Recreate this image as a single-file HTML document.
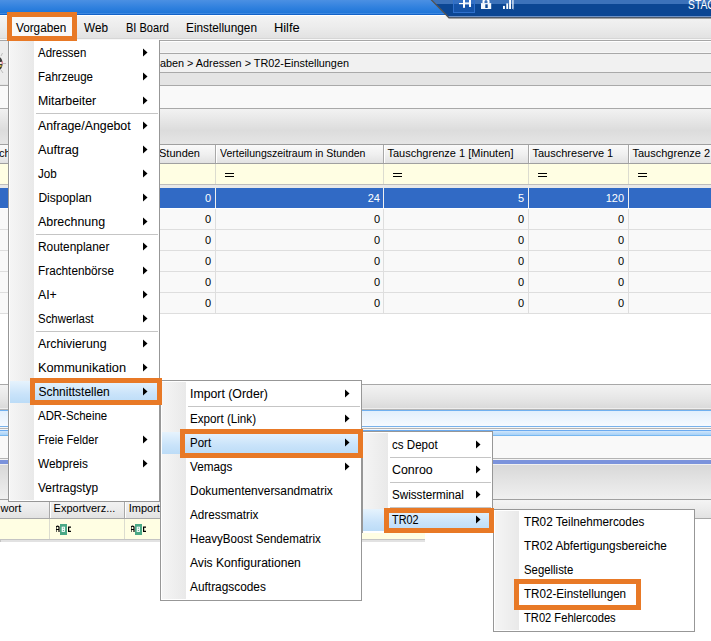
<!DOCTYPE html>
<html><head><meta charset="utf-8"><style>
html,body{margin:0;padding:0;width:711px;height:641px;overflow:hidden;background:#fff;position:relative}
.t{position:absolute;white-space:pre;font-family:"Liberation Sans",sans-serif;color:#000;-webkit-text-stroke:0.05px currentColor}
</style></head><body>
<div style="position:absolute;left:0px;top:0px;width:711px;height:13px;background:linear-gradient(#4b90e3,#2f80de 60%,#1f76d8)"></div>
<div style="position:absolute;left:0px;top:13px;width:711px;height:1px;background:#3d88e0"></div>
<div style="position:absolute;left:0px;top:14px;width:711px;height:1px;background:#1262c8"></div>
<div style="position:absolute;left:0px;top:15px;width:711px;height:1px;background:#ffffff"></div>
<div style="position:absolute;left:0px;top:16px;width:711px;height:22px;background:linear-gradient(#f3f3f3,#ececec 50%,#e2e2e2)"></div>
<div style="position:absolute;left:0px;top:38px;width:711px;height:1px;background:#d6d6d6"></div>
<div style="position:absolute;left:0px;top:39px;width:711px;height:1px;background:#f8f8f8"></div>
<svg style="position:absolute;left:0;top:0" width="711" height="20"><polygon points="431,0 711,0 711,18 449,18" fill="#0b4693"/><polygon points="431,0 711,0 711,4 435,4" fill="#3c72ba"/><polygon points="447,16 711,16 711,17.4 448.4,17.4" fill="#6e92c6"/><polyline points="431,-0.5 449,17.8 711,17.8" fill="none" stroke="#555" stroke-width="1.3"/></svg>
<div style="position:absolute;left:453px;top:-1px;width:22px;height:14px;background:rgba(40,110,210,0.35);border:1px solid #2f70cc;box-sizing:border-box"></div>
<svg style="position:absolute;left:455px;top:0" width="120" height="14"><g fill="#fff"><rect x="4" y="3" width="4" height="1.2"/><rect x="8" y="0" width="2" height="7.8"/><rect x="14" y="0" width="2" height="7"/><rect x="10" y="2.4" width="4" height="2" fill="#e8f0fb"/></g></svg>
<svg style="position:absolute;left:478px;top:0" width="20" height="14"><path d="M5.5 3.5 V1.5 a2.5 2.5 0 0 1 5 0 V3.5" stroke="#fff" stroke-width="2" fill="none"/><rect x="3" y="3.1" width="10.2" height="5.9" fill="#f4f8fd"/><rect x="7.3" y="4.3" width="2.4" height="3.7" fill="#0b4693"/></svg>
<svg style="position:absolute;left:501px;top:0" width="20" height="14"><g fill="#fff"><rect x="2" y="5.9" width="1.9" height="3.1"/><rect x="5.3" y="3.4" width="1.9" height="5.6"/><rect x="8.1" y="0" width="1.9" height="9"/></g><path d="M11 0 L12.8 1 L11 2 L12.8 3 L11 4 L12.8 5 L11 6 L12.8 7 L11 8 L12.8 9" stroke="#e0ebf8" stroke-width="0.9" fill="none"/></svg>
<div class="t" style="left:687.5px;top:-2.41px;font-size:12px;line-height:14px;transform:scaleX(0.86);transform-origin:0 0;color:#fff">STAGING</div>
<div class="t" style="left:84px;top:20.89px;font-size:12px;line-height:14px;transform:scaleX(0.9792);transform-origin:0.0px 0;color:#000">Web</div>
<div class="t" style="left:125.5px;top:20.89px;font-size:12px;line-height:14px;transform:scaleX(0.92);transform-origin:0 0;color:#000">BI Board</div>
<div class="t" style="left:186px;top:20.89px;font-size:12px;line-height:14px;transform:scaleX(0.9845);transform-origin:1.0px 0;color:#000">Einstellungen</div>
<div class="t" style="left:274.3px;top:20.89px;font-size:12px;line-height:14px;transform:scaleX(1.0739);transform-origin:0.7px 0;color:#000">Hilfe</div>
<div style="position:absolute;left:12px;top:17px;width:60px;height:19px;background:#f9f9f9"></div>
<div class="t" style="left:16px;top:20.89px;font-size:12px;line-height:14px;transform:scaleX(0.9784);transform-origin:0.0px 0;color:#000">Vorgaben</div>
<div style="position:absolute;left:0px;top:40px;width:711px;height:1px;background:#a6a6a6"></div>
<div style="position:absolute;left:0px;top:41px;width:711px;height:1px;background:#ffffff"></div>
<div style="position:absolute;left:0px;top:42px;width:711px;height:10px;background:#f0f0f0"></div>
<div style="position:absolute;left:0px;top:52px;width:711px;height:1px;background:#f6f6f6"></div>
<div style="position:absolute;left:0px;top:53px;width:711px;height:1px;background:#a8a8a8"></div>
<div style="position:absolute;left:0px;top:54px;width:711px;height:18px;background:#f1f1f1"></div>
<div style="position:absolute;left:0px;top:72px;width:711px;height:1px;background:#a9a9a9"></div>
<div style="position:absolute;left:0px;top:73px;width:711px;height:12px;background:#e4e4e4"></div>
<div style="position:absolute;left:0px;top:85px;width:711px;height:1px;background:#a9a9a9"></div>
<div style="position:absolute;left:0px;top:86px;width:711px;height:22px;background:#f9f9f9"></div>
<div style="position:absolute;left:0px;top:108px;width:711px;height:1px;background:#a9a9a9"></div>
<div style="position:absolute;left:0px;top:109px;width:711px;height:36px;background:linear-gradient(#f2f2f2,#dcdcdc 60%,#e6e6e6)"></div>
<div style="position:absolute;left:0px;top:41px;width:8px;height:43px;background:#ececec"></div>
<svg style="position:absolute;left:0px;top:48px" width="8" height="30"><g stroke="#b0b0b0" stroke-width="0.8" fill="none"><path d="M1 8 L2.5 5"/><path d="M2 15.5 L6 15.5"/><path d="M1 22 L3 25"/></g><ellipse cx="-1" cy="15.5" rx="3.6" ry="6.5" fill="#3c3c3c"/><rect x="0" y="14" width="2" height="2" fill="#f0f0f0"/><rect x="1.5" y="13.5" width="1.5" height="2.5" fill="#e08898"/><rect x="0" y="17" width="1.5" height="2" fill="#c8b040"/></svg>
<div class="t" style="left:160px;top:57.41px;font-size:11px;line-height:13px;transform:scaleX(0.985);transform-origin:0 0;-webkit-text-stroke:0;color:#000">aben &gt; Adressen &gt; TR02-Einstellungen</div>
<div style="position:absolute;left:0px;top:144px;width:711px;height:1px;background:#a0a0a0"></div>
<div style="position:absolute;left:0px;top:145px;width:711px;height:18px;background:linear-gradient(#fafafa,#f0f0f0 50%,#e2e2e2)"></div>
<div style="position:absolute;left:0px;top:163px;width:711px;height:1px;background:#a0a0a0"></div>
<div style="position:absolute;left:215px;top:145px;width:1px;height:18px;background:#a8a8a8"></div>
<div style="position:absolute;left:216px;top:145px;width:1px;height:18px;background:#ffffff"></div>
<div style="position:absolute;left:383px;top:145px;width:1px;height:18px;background:#a8a8a8"></div>
<div style="position:absolute;left:384px;top:145px;width:1px;height:18px;background:#ffffff"></div>
<div style="position:absolute;left:528px;top:145px;width:1px;height:18px;background:#a8a8a8"></div>
<div style="position:absolute;left:529px;top:145px;width:1px;height:18px;background:#ffffff"></div>
<div style="position:absolute;left:628px;top:145px;width:1px;height:18px;background:#a8a8a8"></div>
<div style="position:absolute;left:629px;top:145px;width:1px;height:18px;background:#ffffff"></div>
<div class="t" style="left:-1px;top:147.11px;font-size:11px;line-height:13px;-webkit-text-stroke:0;color:#000">ch</div>
<div class="t" style="left:159px;top:147.11px;font-size:11px;line-height:13px;-webkit-text-stroke:0;color:#000">Stunden</div>
<div class="t" style="left:220px;top:147.11px;font-size:11px;line-height:13px;transform:scaleX(0.955);transform-origin:0 0;-webkit-text-stroke:0;color:#000">Verteilungszeitraum in Stunden</div>
<div class="t" style="left:387.5px;top:147.11px;font-size:11px;line-height:13px;-webkit-text-stroke:0;color:#000">Tauschgrenze 1 [Minuten]</div>
<div class="t" style="left:532.5px;top:147.11px;font-size:11px;line-height:13px;-webkit-text-stroke:0;color:#000">Tauschreserve 1</div>
<div class="t" style="left:632.5px;top:147.11px;font-size:11px;line-height:13px;-webkit-text-stroke:0;color:#000">Tauschgrenze 2</div>
<div style="position:absolute;left:0px;top:164px;width:711px;height:20px;background:#fffee3"></div>
<div style="position:absolute;left:215px;top:164px;width:1px;height:20px;background:#dcdcd0"></div>
<div style="position:absolute;left:383px;top:164px;width:1px;height:20px;background:#dcdcd0"></div>
<div style="position:absolute;left:528px;top:164px;width:1px;height:20px;background:#dcdcd0"></div>
<div style="position:absolute;left:628px;top:164px;width:1px;height:20px;background:#dcdcd0"></div>
<div style="position:absolute;left:225px;top:173px;width:9px;height:1px;background:#000"></div>
<div style="position:absolute;left:225px;top:176px;width:9px;height:1px;background:#000"></div>
<div style="position:absolute;left:393px;top:173px;width:9px;height:1px;background:#000"></div>
<div style="position:absolute;left:393px;top:176px;width:9px;height:1px;background:#000"></div>
<div style="position:absolute;left:538px;top:173px;width:9px;height:1px;background:#000"></div>
<div style="position:absolute;left:538px;top:176px;width:9px;height:1px;background:#000"></div>
<div style="position:absolute;left:638px;top:173px;width:9px;height:1px;background:#000"></div>
<div style="position:absolute;left:638px;top:176px;width:9px;height:1px;background:#000"></div>
<div style="position:absolute;left:0px;top:184px;width:711px;height:1px;background:#bdbdbd"></div>
<div style="position:absolute;left:0px;top:185px;width:711px;height:3px;background:#e8e8e8"></div>
<div style="position:absolute;left:0px;top:188px;width:711px;height:20px;background:#316ac5"></div>
<div style="position:absolute;left:215px;top:188px;width:1px;height:20px;background:#f0f0f0"></div>
<div style="position:absolute;left:383px;top:188px;width:1px;height:20px;background:#f0f0f0"></div>
<div style="position:absolute;left:528px;top:188px;width:1px;height:20px;background:#f0f0f0"></div>
<div style="position:absolute;left:628px;top:188px;width:1px;height:20px;background:#f0f0f0"></div>
<div class="t" style="right:500px;top:191.5px;font-size:11px;line-height:13px;color:#fff;-webkit-text-stroke:0">0</div>
<div class="t" style="right:331px;top:191.5px;font-size:11px;line-height:13px;color:#fff;-webkit-text-stroke:0">24</div>
<div class="t" style="right:187px;top:191.5px;font-size:11px;line-height:13px;color:#fff;-webkit-text-stroke:0">5</div>
<div class="t" style="right:87px;top:191.5px;font-size:11px;line-height:13px;color:#fff;-webkit-text-stroke:0">120</div>
<div style="position:absolute;left:0px;top:209px;width:711px;height:20px;background:#f9f9f9"></div>
<div style="position:absolute;left:0px;top:229px;width:711px;height:1px;background:#dedede"></div>
<div style="position:absolute;left:215px;top:209px;width:1px;height:21px;background:#dedede"></div>
<div style="position:absolute;left:383px;top:209px;width:1px;height:21px;background:#dedede"></div>
<div style="position:absolute;left:528px;top:209px;width:1px;height:21px;background:#dedede"></div>
<div style="position:absolute;left:628px;top:209px;width:1px;height:21px;background:#dedede"></div>
<div class="t" style="right:500px;top:212.5px;font-size:11px;line-height:13px;color:#000;-webkit-text-stroke:0">0</div>
<div class="t" style="right:331px;top:212.5px;font-size:11px;line-height:13px;color:#000;-webkit-text-stroke:0">0</div>
<div class="t" style="right:187px;top:212.5px;font-size:11px;line-height:13px;color:#000;-webkit-text-stroke:0">0</div>
<div class="t" style="right:87px;top:212.5px;font-size:11px;line-height:13px;color:#000;-webkit-text-stroke:0">0</div>
<div style="position:absolute;left:0px;top:230px;width:711px;height:20px;background:#f9f9f9"></div>
<div style="position:absolute;left:0px;top:250px;width:711px;height:1px;background:#dedede"></div>
<div style="position:absolute;left:215px;top:230px;width:1px;height:21px;background:#dedede"></div>
<div style="position:absolute;left:383px;top:230px;width:1px;height:21px;background:#dedede"></div>
<div style="position:absolute;left:528px;top:230px;width:1px;height:21px;background:#dedede"></div>
<div style="position:absolute;left:628px;top:230px;width:1px;height:21px;background:#dedede"></div>
<div class="t" style="right:500px;top:233.5px;font-size:11px;line-height:13px;color:#000;-webkit-text-stroke:0">0</div>
<div class="t" style="right:331px;top:233.5px;font-size:11px;line-height:13px;color:#000;-webkit-text-stroke:0">0</div>
<div class="t" style="right:187px;top:233.5px;font-size:11px;line-height:13px;color:#000;-webkit-text-stroke:0">0</div>
<div class="t" style="right:87px;top:233.5px;font-size:11px;line-height:13px;color:#000;-webkit-text-stroke:0">0</div>
<div style="position:absolute;left:0px;top:251px;width:711px;height:20px;background:#f9f9f9"></div>
<div style="position:absolute;left:0px;top:271px;width:711px;height:1px;background:#dedede"></div>
<div style="position:absolute;left:215px;top:251px;width:1px;height:21px;background:#dedede"></div>
<div style="position:absolute;left:383px;top:251px;width:1px;height:21px;background:#dedede"></div>
<div style="position:absolute;left:528px;top:251px;width:1px;height:21px;background:#dedede"></div>
<div style="position:absolute;left:628px;top:251px;width:1px;height:21px;background:#dedede"></div>
<div class="t" style="right:500px;top:254.5px;font-size:11px;line-height:13px;color:#000;-webkit-text-stroke:0">0</div>
<div class="t" style="right:331px;top:254.5px;font-size:11px;line-height:13px;color:#000;-webkit-text-stroke:0">0</div>
<div class="t" style="right:187px;top:254.5px;font-size:11px;line-height:13px;color:#000;-webkit-text-stroke:0">0</div>
<div class="t" style="right:87px;top:254.5px;font-size:11px;line-height:13px;color:#000;-webkit-text-stroke:0">0</div>
<div style="position:absolute;left:0px;top:272px;width:711px;height:20px;background:#f9f9f9"></div>
<div style="position:absolute;left:0px;top:292px;width:711px;height:1px;background:#dedede"></div>
<div style="position:absolute;left:215px;top:272px;width:1px;height:21px;background:#dedede"></div>
<div style="position:absolute;left:383px;top:272px;width:1px;height:21px;background:#dedede"></div>
<div style="position:absolute;left:528px;top:272px;width:1px;height:21px;background:#dedede"></div>
<div style="position:absolute;left:628px;top:272px;width:1px;height:21px;background:#dedede"></div>
<div class="t" style="right:500px;top:275.5px;font-size:11px;line-height:13px;color:#000;-webkit-text-stroke:0">0</div>
<div class="t" style="right:331px;top:275.5px;font-size:11px;line-height:13px;color:#000;-webkit-text-stroke:0">0</div>
<div class="t" style="right:187px;top:275.5px;font-size:11px;line-height:13px;color:#000;-webkit-text-stroke:0">0</div>
<div class="t" style="right:87px;top:275.5px;font-size:11px;line-height:13px;color:#000;-webkit-text-stroke:0">0</div>
<div style="position:absolute;left:0px;top:293px;width:711px;height:20px;background:#f9f9f9"></div>
<div style="position:absolute;left:0px;top:313px;width:711px;height:1px;background:#dedede"></div>
<div style="position:absolute;left:215px;top:293px;width:1px;height:21px;background:#dedede"></div>
<div style="position:absolute;left:383px;top:293px;width:1px;height:21px;background:#dedede"></div>
<div style="position:absolute;left:528px;top:293px;width:1px;height:21px;background:#dedede"></div>
<div style="position:absolute;left:628px;top:293px;width:1px;height:21px;background:#dedede"></div>
<div class="t" style="right:500px;top:296.5px;font-size:11px;line-height:13px;color:#000;-webkit-text-stroke:0">0</div>
<div class="t" style="right:331px;top:296.5px;font-size:11px;line-height:13px;color:#000;-webkit-text-stroke:0">0</div>
<div class="t" style="right:187px;top:296.5px;font-size:11px;line-height:13px;color:#000;-webkit-text-stroke:0">0</div>
<div class="t" style="right:87px;top:296.5px;font-size:11px;line-height:13px;color:#000;-webkit-text-stroke:0">0</div>
<div style="position:absolute;left:0px;top:384px;width:711px;height:1px;background:#a8a8a8"></div>
<div style="position:absolute;left:0px;top:385px;width:711px;height:23px;background:linear-gradient(#f3f3f3,#e6e6e6 60%,#dadada)"></div>
<div style="position:absolute;left:0px;top:408px;width:711px;height:1px;background:#eeeeee"></div>
<div style="position:absolute;left:0px;top:409px;width:711px;height:1px;background:#b4b4b4"></div>
<div style="position:absolute;left:0px;top:410px;width:711px;height:1px;background:#70b0f0"></div>
<div style="position:absolute;left:0px;top:411px;width:711px;height:15px;background:linear-gradient(#e2effc,#f6faff)"></div>
<div style="position:absolute;left:0px;top:426px;width:711px;height:1px;background:#78b2ec"></div>
<div style="position:absolute;left:0px;top:427px;width:711px;height:1px;background:#f8f8f8"></div>
<div style="position:absolute;left:0px;top:428px;width:711px;height:1px;background:#b4b4b4"></div>
<div style="position:absolute;left:0px;top:429px;width:711px;height:1px;background:#f4f8fc"></div>
<div style="position:absolute;left:0px;top:430px;width:711px;height:1px;background:#6aaaf0"></div>
<div style="position:absolute;left:0px;top:431px;width:711px;height:5px;background:linear-gradient(#cfe5fa,#9ccdf8)"></div>
<div style="position:absolute;left:0px;top:435px;width:711px;height:1px;background:#78b8f0"></div>
<div style="position:absolute;left:0px;top:436px;width:711px;height:22px;background:#f9f9f9"></div>
<div style="position:absolute;left:0px;top:458px;width:711px;height:1px;background:#b4b4b4"></div>
<div style="position:absolute;left:0px;top:459px;width:711px;height:1px;background:#f4f4f4"></div>
<div style="position:absolute;left:0px;top:460px;width:711px;height:4px;background:#7b93dc"></div>
<div style="position:absolute;left:0px;top:464px;width:711px;height:1px;background:#f0f0f0"></div>
<div style="position:absolute;left:0px;top:465px;width:711px;height:34px;background:linear-gradient(#d8d8d8,#e2e2e2 40%,#f0f0f0)"></div>
<div style="position:absolute;left:0px;top:499px;width:711px;height:1px;background:#a0a0a0"></div>
<div style="position:absolute;left:0px;top:500px;width:711px;height:18px;background:linear-gradient(#f4f4f4,#ececec 50%,#e2e2e2)"></div>
<div style="position:absolute;left:0px;top:518px;width:711px;height:1px;background:#a8a8a8"></div>
<div style="position:absolute;left:49px;top:500px;width:1px;height:18px;background:#a8a8a8"></div>
<div style="position:absolute;left:50px;top:500px;width:1px;height:18px;background:#fff"></div>
<div style="position:absolute;left:124px;top:500px;width:1px;height:18px;background:#a8a8a8"></div>
<div style="position:absolute;left:125px;top:500px;width:1px;height:18px;background:#fff"></div>
<div class="t" style="left:0.5px;top:501.91px;font-size:11px;line-height:13px;-webkit-text-stroke:0;color:#000">wort</div>
<div class="t" style="left:53.6px;top:501.91px;font-size:11px;line-height:13px;-webkit-text-stroke:0;color:#000">Exportverz...</div>
<div class="t" style="left:128.7px;top:501.91px;font-size:11px;line-height:13px;-webkit-text-stroke:0;color:#000">Import</div>
<div style="position:absolute;left:0px;top:519px;width:425px;height:20px;background:#fffee3"></div>
<div style="position:absolute;left:49px;top:519px;width:1px;height:20px;background:#dcdcd0"></div>
<div style="position:absolute;left:124px;top:519px;width:1px;height:20px;background:#dcdcd0"></div>
<div style="position:absolute;left:0px;top:538.5px;width:426px;height:4px;background:#e2e2e2;border:1px solid #c4c4c4;box-sizing:border-box"></div>
<div style="position:absolute;left:0px;top:542px;width:711px;height:99px;background:#fff"></div>
<div style="position:absolute;left:425px;top:519px;width:286px;height:23px;background:#fff"></div>
<svg style="position:absolute;left:56px;top:524px" width="16" height="12"><path d="M0 3 V8 M0 3 Q1.5 1.5 3 3 V8 M0 5.5 H3" stroke="#000" stroke-width="1.2" fill="none"/><rect x="4" y="0" width="7" height="11" fill="#4aa886"/><rect x="5.7" y="2.7" width="3.2" height="5.2" fill="#fff"/><rect x="6.8" y="3.6" width="1.1" height="1.1" fill="#4aa886"/><rect x="6.8" y="5.9" width="1.1" height="1.1" fill="#4aa886"/><path d="M15 3.2 H12.6 V7.4 H15" stroke="#000" stroke-width="1.2" fill="none"/></svg>
<svg style="position:absolute;left:131px;top:524px" width="16" height="12"><path d="M0 3 V8 M0 3 Q1.5 1.5 3 3 V8 M0 5.5 H3" stroke="#000" stroke-width="1.2" fill="none"/><rect x="4" y="0" width="7" height="11" fill="#4aa886"/><rect x="5.7" y="2.7" width="3.2" height="5.2" fill="#fff"/><rect x="6.8" y="3.6" width="1.1" height="1.1" fill="#4aa886"/><rect x="6.8" y="5.9" width="1.1" height="1.1" fill="#4aa886"/><path d="M15 3.2 H12.6 V7.4 H15" stroke="#000" stroke-width="1.2" fill="none"/></svg>
<div style="position:absolute;left:8px;top:40px;width:152px;height:462px;background:#fff;border:1px solid #979797;box-sizing:border-box;border-top:none;"></div>
<div style="position:absolute;left:10px;top:41px;width:24px;height:459px;background:linear-gradient(90deg,#f5f5f5,#e9e9e9)"></div>
<div style="position:absolute;left:10px;top:381px;width:148px;height:22px;background:linear-gradient(#e6f3fd,#c9e3fa 60%,#bcdcf7)"></div>
<div class="t" style="left:38.4px;top:46.09px;font-size:12px;line-height:14px;transform:scaleX(0.951);transform-origin:0.6px 0;color:#000">Adressen</div>
<svg style="position:absolute;left:143px;top:48.0px" width="6" height="9"><polygon points="0,0.5 4.5,4.5 0,8.5" fill="#000"/></svg>
<div class="t" style="left:38.4px;top:70.09px;font-size:12px;line-height:14px;transform:scaleX(0.9571);transform-origin:0.6px 0;color:#000">Fahrzeuge</div>
<svg style="position:absolute;left:143px;top:72.0px" width="6" height="9"><polygon points="0,0.5 4.5,4.5 0,8.5" fill="#000"/></svg>
<div class="t" style="left:38.4px;top:94.09px;font-size:12px;line-height:14px;transform:scaleX(1.0268);transform-origin:0.6px 0;color:#000">Mitarbeiter</div>
<svg style="position:absolute;left:143px;top:96.0px" width="6" height="9"><polygon points="0,0.5 4.5,4.5 0,8.5" fill="#000"/></svg>
<div style="position:absolute;left:36px;top:113px;width:122px;height:1px;background:#c5c5c5"></div>
<div class="t" style="left:38.4px;top:119.09px;font-size:12px;line-height:14px;transform:scaleX(1.0289);transform-origin:0.6px 0;color:#000">Anfrage/Angebot</div>
<svg style="position:absolute;left:143px;top:121.0px" width="6" height="9"><polygon points="0,0.5 4.5,4.5 0,8.5" fill="#000"/></svg>
<div class="t" style="left:38.4px;top:143.09px;font-size:12px;line-height:14px;transform:scaleX(1.0568);transform-origin:0.6px 0;color:#000">Auftrag</div>
<svg style="position:absolute;left:143px;top:145.0px" width="6" height="9"><polygon points="0,0.5 4.5,4.5 0,8.5" fill="#000"/></svg>
<div class="t" style="left:38.4px;top:167.09px;font-size:12px;line-height:14px;transform:scaleX(0.9667);transform-origin:0.6px 0;color:#000">Job</div>
<svg style="position:absolute;left:143px;top:169.0px" width="6" height="9"><polygon points="0,0.5 4.5,4.5 0,8.5" fill="#000"/></svg>
<div class="t" style="left:38.4px;top:191.09px;font-size:12px;line-height:14px;transform:scaleX(1.0);transform-origin:0.6px 0;color:#000">Dispoplan</div>
<svg style="position:absolute;left:143px;top:193.0px" width="6" height="9"><polygon points="0,0.5 4.5,4.5 0,8.5" fill="#000"/></svg>
<div class="t" style="left:38.4px;top:215.09px;font-size:12px;line-height:14px;transform:scaleX(1.0365);transform-origin:0.6px 0;color:#000">Abrechnung</div>
<svg style="position:absolute;left:143px;top:217.0px" width="6" height="9"><polygon points="0,0.5 4.5,4.5 0,8.5" fill="#000"/></svg>
<div style="position:absolute;left:36px;top:234px;width:122px;height:1px;background:#c5c5c5"></div>
<div class="t" style="left:38.4px;top:240.09px;font-size:12px;line-height:14px;transform:scaleX(0.9901);transform-origin:0.6px 0;color:#000">Routenplaner</div>
<svg style="position:absolute;left:143px;top:242.0px" width="6" height="9"><polygon points="0,0.5 4.5,4.5 0,8.5" fill="#000"/></svg>
<div class="t" style="left:38.4px;top:264.09px;font-size:12px;line-height:14px;transform:scaleX(0.9816);transform-origin:0.6px 0;color:#000">Frachtenbörse</div>
<svg style="position:absolute;left:143px;top:266.0px" width="6" height="9"><polygon points="0,0.5 4.5,4.5 0,8.5" fill="#000"/></svg>
<div class="t" style="left:38.4px;top:288.09px;font-size:12px;line-height:14px;transform:scaleX(1.0235);transform-origin:0.6px 0;color:#000">AI+</div>
<svg style="position:absolute;left:143px;top:290.0px" width="6" height="9"><polygon points="0,0.5 4.5,4.5 0,8.5" fill="#000"/></svg>
<div class="t" style="left:38.4px;top:312.09px;font-size:12px;line-height:14px;transform:scaleX(0.95);transform-origin:0.6px 0;color:#000">Schwerlast</div>
<svg style="position:absolute;left:143px;top:314.0px" width="6" height="9"><polygon points="0,0.5 4.5,4.5 0,8.5" fill="#000"/></svg>
<div style="position:absolute;left:36px;top:331px;width:122px;height:1px;background:#c5c5c5"></div>
<div class="t" style="left:38.4px;top:337.09px;font-size:12px;line-height:14px;transform:scaleX(1.0277);transform-origin:0.6px 0;color:#000">Archivierung</div>
<svg style="position:absolute;left:143px;top:339.0px" width="6" height="9"><polygon points="0,0.5 4.5,4.5 0,8.5" fill="#000"/></svg>
<div class="t" style="left:38.4px;top:361.09px;font-size:12px;line-height:14px;transform:scaleX(1.0663);transform-origin:1.6px 0;color:#000">Kommunikation</div>
<svg style="position:absolute;left:143px;top:363.0px" width="6" height="9"><polygon points="0,0.5 4.5,4.5 0,8.5" fill="#000"/></svg>
<div class="t" style="left:38.4px;top:385.09px;font-size:12px;line-height:14px;transform:scaleX(1.0);transform-origin:0.6px 0;color:#000">Schnittstellen</div>
<svg style="position:absolute;left:143px;top:387.0px" width="6" height="9"><polygon points="0,0.5 4.5,4.5 0,8.5" fill="#000"/></svg>
<div class="t" style="left:38.4px;top:409.09px;font-size:12px;line-height:14px;transform:scaleX(0.95);transform-origin:0.6px 0;color:#000">ADR-Scheine</div>
<div class="t" style="left:38.4px;top:433.09px;font-size:12px;line-height:14px;transform:scaleX(0.9297);transform-origin:0.6px 0;color:#000">Freie Felder</div>
<svg style="position:absolute;left:143px;top:435.0px" width="6" height="9"><polygon points="0,0.5 4.5,4.5 0,8.5" fill="#000"/></svg>
<div class="t" style="left:38.4px;top:457.09px;font-size:12px;line-height:14px;transform:scaleX(0.9878);transform-origin:0.6px 0;color:#000">Webpreis</div>
<svg style="position:absolute;left:143px;top:459.0px" width="6" height="9"><polygon points="0,0.5 4.5,4.5 0,8.5" fill="#000"/></svg>
<div class="t" style="left:38.4px;top:481.09px;font-size:12px;line-height:14px;transform:scaleX(0.99);transform-origin:0.6px 0;color:#000">Vertragstyp</div>
<div style="position:absolute;left:160px;top:380px;width:202px;height:221px;background:#fff;border:1px solid #979797;box-sizing:border-box;"></div>
<div style="position:absolute;left:162px;top:382px;width:24px;height:217px;background:linear-gradient(90deg,#f5f5f5,#e9e9e9)"></div>
<div style="position:absolute;left:162px;top:432px;width:198px;height:22px;background:linear-gradient(#e6f3fd,#c9e3fa 60%,#bcdcf7)"></div>
<div class="t" style="left:190.0px;top:386.99px;font-size:12px;line-height:14px;transform:scaleX(1.0257);transform-origin:1.5px 0;color:#000">Import (Order)</div>
<svg style="position:absolute;left:345px;top:388.9px" width="6" height="9"><polygon points="0,0.5 4.5,4.5 0,8.5" fill="#000"/></svg>
<div style="position:absolute;left:188px;top:406px;width:172px;height:1px;background:#c5c5c5"></div>
<div class="t" style="left:190.0px;top:411.99px;font-size:12px;line-height:14px;transform:scaleX(0.9701);transform-origin:0.5px 0;color:#000">Export (Link)</div>
<svg style="position:absolute;left:345px;top:413.9px" width="6" height="9"><polygon points="0,0.5 4.5,4.5 0,8.5" fill="#000"/></svg>
<div style="position:absolute;left:188px;top:431px;width:172px;height:1px;background:#c5c5c5"></div>
<div class="t" style="left:190.0px;top:436.19px;font-size:12px;line-height:14px;transform:scaleX(0.9591);transform-origin:0.5px 0;color:#000">Port</div>
<svg style="position:absolute;left:345px;top:438.1px" width="6" height="9"><polygon points="0,0.5 4.5,4.5 0,8.5" fill="#000"/></svg>
<div class="t" style="left:190.0px;top:460.09px;font-size:12px;line-height:14px;transform:scaleX(0.9786);transform-origin:0.5px 0;color:#000">Vemags</div>
<svg style="position:absolute;left:345px;top:462.0px" width="6" height="9"><polygon points="0,0.5 4.5,4.5 0,8.5" fill="#000"/></svg>
<div class="t" style="left:190.0px;top:483.89px;font-size:12px;line-height:14px;transform:scaleX(0.9958);transform-origin:0.5px 0;color:#000">Dokumentenversandmatrix</div>
<div class="t" style="left:190.0px;top:507.79px;font-size:12px;line-height:14px;transform:scaleX(0.9768);transform-origin:0.5px 0;color:#000">Adressmatrix</div>
<div class="t" style="left:190.0px;top:531.79px;font-size:12px;line-height:14px;transform:scaleX(0.9659);transform-origin:0.5px 0;color:#000">HeavyBoost Sendematrix</div>
<div class="t" style="left:190.0px;top:555.89px;font-size:12px;line-height:14px;transform:scaleX(1.0092);transform-origin:0.5px 0;color:#000">Avis Konfigurationen</div>
<div class="t" style="left:190.0px;top:579.99px;font-size:12px;line-height:14px;transform:scaleX(0.9895);transform-origin:0.5px 0;color:#000">Auftragscodes</div>
<div style="position:absolute;left:362px;top:431px;width:131px;height:102px;background:#fff;border:1px solid #979797;box-sizing:border-box;border-bottom:none;"></div>
<div style="position:absolute;left:363px;top:433px;width:25px;height:98px;background:linear-gradient(90deg,#f5f5f5,#e9e9e9)"></div>
<div style="position:absolute;left:363px;top:509px;width:128px;height:22px;background:linear-gradient(#e6f3fd,#c9e3fa 60%,#bcdcf7)"></div>
<div class="t" style="left:392.4px;top:437.59px;font-size:12px;line-height:14px;transform:scaleX(0.9638);transform-origin:0.6px 0;color:#000">cs Depot</div>
<svg style="position:absolute;left:475.5px;top:439.5px" width="6" height="9"><polygon points="0,0.5 4.5,4.5 0,8.5" fill="#000"/></svg>
<div style="position:absolute;left:390px;top:457px;width:101px;height:1px;background:#c5c5c5"></div>
<div class="t" style="left:392.4px;top:462.59px;font-size:12px;line-height:14px;transform:scaleX(1.0342);transform-origin:0.6px 0;color:#000">Conroo</div>
<svg style="position:absolute;left:475.5px;top:464.5px" width="6" height="9"><polygon points="0,0.5 4.5,4.5 0,8.5" fill="#000"/></svg>
<div style="position:absolute;left:390px;top:482px;width:101px;height:1px;background:#c5c5c5"></div>
<div class="t" style="left:392.4px;top:487.89px;font-size:12px;line-height:14px;transform:scaleX(0.9712);transform-origin:0.6px 0;color:#000">Swissterminal</div>
<svg style="position:absolute;left:475.5px;top:489.8px" width="6" height="9"><polygon points="0,0.5 4.5,4.5 0,8.5" fill="#000"/></svg>
<div style="position:absolute;left:390px;top:507px;width:101px;height:1px;background:#c5c5c5"></div>
<div class="t" style="left:392.4px;top:512.89px;font-size:12px;line-height:14px;transform:scaleX(0.9036);transform-origin:0.6px 0;color:#000">TR02</div>
<svg style="position:absolute;left:475.5px;top:514.8px" width="6" height="9"><polygon points="0,0.5 4.5,4.5 0,8.5" fill="#000"/></svg>
<div style="position:absolute;left:493px;top:509px;width:202px;height:123px;background:#fff;border:1px solid #979797;box-sizing:border-box;"></div>
<div style="position:absolute;left:495px;top:511px;width:24px;height:119px;background:linear-gradient(90deg,#f5f5f5,#e9e9e9)"></div>
<div class="t" style="left:523.6px;top:514.99px;font-size:12px;line-height:14px;transform:scaleX(0.9762);transform-origin:0.4px 0;color:#000">TR02 Teilnehmercodes</div>
<div class="t" style="left:523.6px;top:538.99px;font-size:12px;line-height:14px;transform:scaleX(0.9814);transform-origin:0.4px 0;color:#000">TR02 Abfertigungsbereiche</div>
<div class="t" style="left:523.6px;top:562.99px;font-size:12px;line-height:14px;transform:scaleX(0.9471);transform-origin:0.4px 0;color:#000">Segelliste</div>
<div class="t" style="left:523.6px;top:586.99px;font-size:12px;line-height:14px;transform:scaleX(0.9683);transform-origin:0.4px 0;color:#000">TR02-Einstellungen</div>
<div class="t" style="left:523.6px;top:610.99px;font-size:12px;line-height:14px;transform:scaleX(0.9286);transform-origin:0.4px 0;color:#000">TR02 Fehlercodes</div>
<div style="position:absolute;left:7px;top:12px;width:70px;height:29px;border:5px solid #e87926;box-sizing:border-box"></div>
<div style="position:absolute;left:30px;top:378px;width:132px;height:27px;border:5px solid #e87926;box-sizing:border-box"></div>
<div style="position:absolute;left:180px;top:429px;width:183px;height:29px;border:5px solid #e87926;box-sizing:border-box"></div>
<div style="position:absolute;left:384px;top:508px;width:110px;height:25px;border:5px solid #e87926;box-sizing:border-box"></div>
<div style="position:absolute;left:514px;top:579px;width:127px;height:31px;border:5px solid #e87926;box-sizing:border-box"></div>
</body></html>
